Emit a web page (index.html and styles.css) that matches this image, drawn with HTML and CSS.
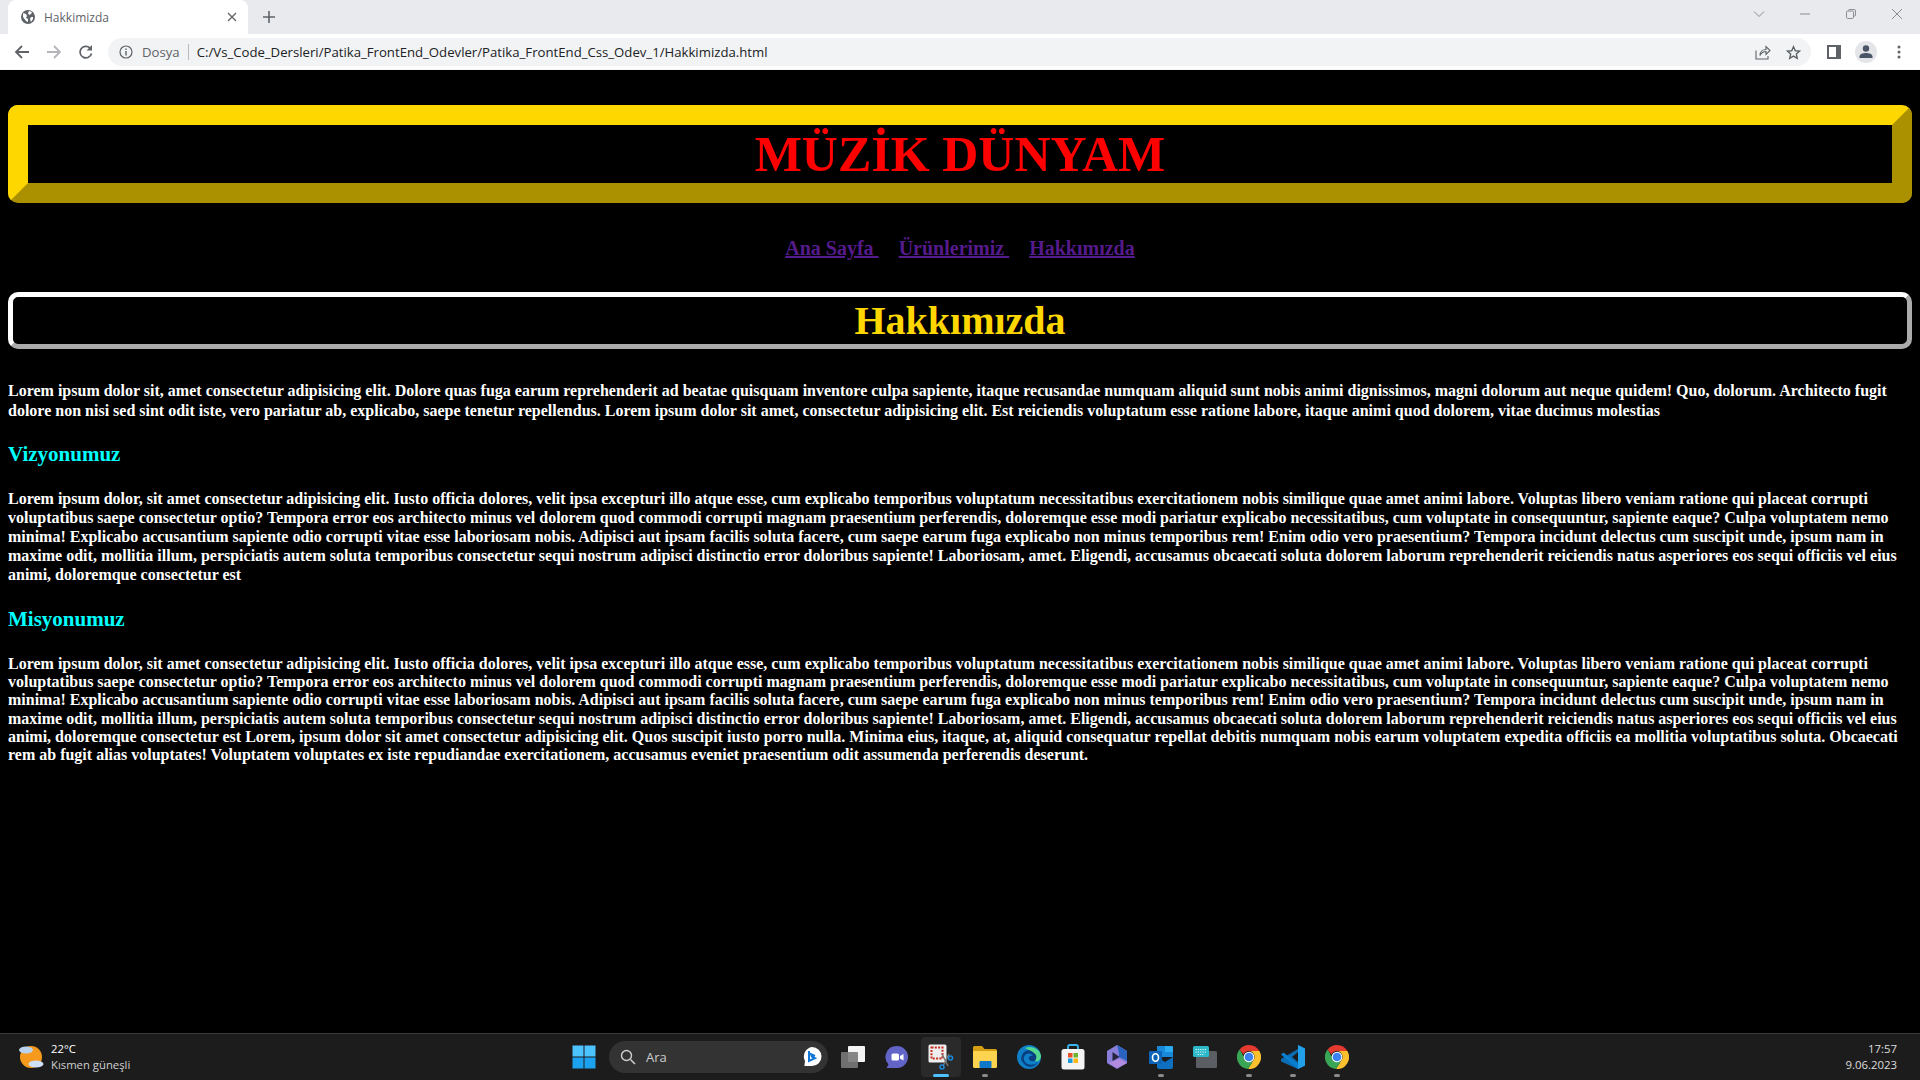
FILE: index.html
```html
<!DOCTYPE html>
<html lang="tr">
<head>
<meta charset="utf-8">
<title>Hakkimizda</title>
<link rel="stylesheet" href="styles.css">
</head>
<body>
<div class="browser">
  <div class="tabstrip">
    <div class="tab">
      <svg class="favicon" width="16" height="16" viewBox="0 0 16 16"><circle cx="8" cy="8" r="7" fill="#5f6368"/><path d="M3 4l3 1 1 2-1 2 2 1v3l-2-1-3-4zM9 2l3 1-1 2-2 1-1-2zM11 8l2 0 0 2-2 3-1-3z" fill="#fff"/></svg>
      <span class="tab-title">Hakkimizda</span>
      <svg class="tab-close" width="10" height="10" viewBox="0 0 10 10"><path d="M1 1l8 8M9 1l-8 8" stroke="#5f6368" stroke-width="1.3"/></svg>
    </div>
    <svg class="newtab" width="12" height="12" viewBox="0 0 12 12"><path d="M6 0v12M0 6h12" stroke="#5f6368" stroke-width="1.6"/></svg>
    <div class="winctrl">
      <svg class="chev" width="12" height="8" viewBox="0 0 12 8"><path d="M1 1.500l5 5 5-5" fill="none" stroke="#8a8d91" stroke-width="1"/></svg>
      <svg width="12" height="12" viewBox="0 0 12 12"><path d="M1 6h10" stroke="#8a8d91" stroke-width="1"/></svg>
      <svg width="12" height="12" viewBox="0 0 12 12"><rect x="1.500" y="3" width="7" height="7.500" rx="1.200" fill="none" stroke="#8a8d91"/><path d="M3.500 3V2.500q0-1 1-1H9q1.500 0 1.500 1.500V7q0 1-1 1H8.500" fill="none" stroke="#8a8d91"/></svg>
      <svg width="12" height="12" viewBox="0 0 12 12"><path d="M1 1l10 10M11 1L1 11" stroke="#8a8d91" stroke-width="1"/></svg>
    </div>
  </div>
  <div class="toolbar">
    <svg class="nav" width="16" height="16" viewBox="0 0 16 16"><path d="M15 8H2M8 2L2 8l6 6" fill="none" stroke="#5f6368" stroke-width="1.800"/></svg>
    <svg class="nav" width="16" height="16" viewBox="0 0 16 16"><path d="M1 8h13M8 2l6 6-6 6" fill="none" stroke="#b3b5b8" stroke-width="1.800"/></svg>
    <svg class="nav" width="16" height="16" viewBox="0 0 16 16"><path d="M13.500 9.500A5.800 5.800 0 1 1 12 4" fill="none" stroke="#5f6368" stroke-width="1.700"/><path d="M14 1v5.500H8.500z" fill="#5f6368"/></svg>
    <div class="omnibox">
      <svg width="14" height="14" viewBox="0 0 14 14"><circle cx="7" cy="7" r="6" fill="none" stroke="#5f6368" stroke-width="1.200"/><path d="M7 6v4.500M7 3.500v1.400" stroke="#5f6368" stroke-width="1.400"/></svg>
      <span class="scheme">Dosya</span>
      <span class="sep"></span>
      <span class="url">C:/Vs_Code_Dersleri/Patika_FrontEnd_Odevler/Patika_FrontEnd_Css_Odev_1/Hakkimizda.html</span>
      <svg class="ob-share" width="16" height="16" viewBox="0 0 16 16"><path d="M1 6.500V15h12v-3M5 11.500C5 7.500 8 5.500 11 5.500V2.500l4 4-4 4V7.500C8.500 7.500 6.500 8.500 5 11.500z" fill="none" stroke="#5f6368" stroke-width="1.100"/></svg>
      <svg class="ob-star" width="15" height="15" viewBox="0 0 16 16"><path d="M8 1.800l1.900 4.300 4.600.4-3.500 3.100 1 4.600L8 11.800l-4 2.400 1-4.600-3.500-3.100 4.600-.4z" fill="none" stroke="#5f6368" stroke-width="1.500"/></svg>
    </div>
    <svg class="tb-side" width="14" height="14" viewBox="0 0 14 14"><rect width="14" height="14" fill="#5f6368"/><rect x="2" y="2" width="7" height="10" fill="#fff"/></svg>
    <div class="avatar"><svg width="14" height="14" viewBox="0 0 14 14"><circle cx="7" cy="3.500" r="3.200" fill="#4a5568"/><path d="M0.500 13v-1.500C.5 9 4 8 7 8s6.500 1 6.500 3.500V13z" fill="#4a5568"/></svg></div>
    <svg class="kebab" width="4" height="14" viewBox="0 0 4 14"><circle cx="2" cy="2" r="1.500" fill="#5f6368"/><circle cx="2" cy="7" r="1.500" fill="#5f6368"/><circle cx="2" cy="12" r="1.500" fill="#5f6368"/></svg>
  </div>
  <main class="page">
    <h1 class="site-title">MÜZİK DÜNYAM</h1>
    <nav class="links">
      <a href="#a">Ana Sayfa </a>
      <a href="#b">Ürünlerimiz </a>
      <a href="#c">Hakkımızda</a>
    </nav>
    <h2 class="page-title">Hakkımızda</h2>
    <p class="intro">Lorem ipsum dolor sit, amet consectetur adipisicing elit. Dolore quas fuga earum reprehenderit ad beatae quisquam inventore culpa sapiente, itaque recusandae numquam aliquid sunt nobis animi dignissimos, magni dolorum aut neque quidem! Quo, dolorum. Architecto fugit dolore non nisi sed sint odit iste, vero pariatur ab, explicabo, saepe tenetur repellendus. Lorem ipsum dolor sit amet, consectetur adipisicing elit. Est reiciendis voluptatum esse ratione labore, itaque animi quod dolorem, vitae ducimus molestias</p>
    <h3 class="vision-title">Vizyonumuz</h3>
    <p class="vision">Lorem ipsum dolor, sit amet consectetur adipisicing elit. Iusto officia dolores, velit ipsa excepturi illo atque esse, cum explicabo temporibus voluptatum necessitatibus exercitationem nobis similique quae amet animi labore. Voluptas libero veniam ratione qui placeat corrupti voluptatibus saepe consectetur optio? Tempora error eos architecto minus vel dolorem quod commodi corrupti magnam praesentium perferendis, doloremque esse modi pariatur explicabo necessitatibus, cum voluptate in consequuntur, sapiente eaque? Culpa voluptatem nemo minima! Explicabo accusantium sapiente odio corrupti vitae esse laboriosam nobis. Adipisci aut ipsam facilis soluta facere, cum saepe earum fuga explicabo non minus temporibus rem! Enim odio vero praesentium? Tempora incidunt delectus cum suscipit unde, ipsum nam in maxime odit, mollitia illum, perspiciatis autem soluta temporibus consectetur sequi nostrum adipisci distinctio error doloribus sapiente! Laboriosam, amet. Eligendi, accusamus obcaecati soluta dolorem laborum reprehenderit reiciendis natus asperiores eos sequi officiis vel eius animi, doloremque consectetur est</p>
    <h3 class="mission-title">Misyonumuz</h3>
    <p class="mission">Lorem ipsum dolor, sit amet consectetur adipisicing elit. Iusto officia dolores, velit ipsa excepturi illo atque esse, cum explicabo temporibus voluptatum necessitatibus exercitationem nobis similique quae amet animi labore. Voluptas libero veniam ratione qui placeat corrupti voluptatibus saepe consectetur optio? Tempora error eos architecto minus vel dolorem quod commodi corrupti magnam praesentium perferendis, doloremque esse modi pariatur explicabo necessitatibus, cum voluptate in consequuntur, sapiente eaque? Culpa voluptatem nemo minima! Explicabo accusantium sapiente odio corrupti vitae esse laboriosam nobis. Adipisci aut ipsam facilis soluta facere, cum saepe earum fuga explicabo non minus temporibus rem! Enim odio vero praesentium? Tempora incidunt delectus cum suscipit unde, ipsum nam in maxime odit, mollitia illum, perspiciatis autem soluta temporibus consectetur sequi nostrum adipisci distinctio error doloribus sapiente! Laboriosam, amet. Eligendi, accusamus obcaecati soluta dolorem laborum reprehenderit reiciendis natus asperiores eos sequi officiis vel eius animi, doloremque consectetur est Lorem, ipsum dolor sit amet consectetur adipisicing elit. Quos suscipit iusto porro nulla. Minima eius, itaque, at, aliquid consequatur repellat debitis numquam nobis earum voluptatem expedita officiis ea mollitia voluptatibus soluta. Obcaecati rem ab fugit alias voluptates! Voluptatem voluptates ex iste repudiandae exercitationem, accusamus eveniet praesentium odit assumenda perferendis deserunt.</p>
  </main>
  <footer class="taskbar">
    <div class="weather">
      <svg width="28" height="28" viewBox="0 0 28 28"><circle cx="14" cy="14" r="11" fill="#f59a1c"/><ellipse cx="9" cy="7" rx="7" ry="3.500" fill="#b9d3ee"/><ellipse cx="19" cy="21" rx="7.500" ry="3.500" fill="#cfe1f5"/></svg>
      <div class="weather-text"><span class="temp">22°C</span><span class="cond">Kısmen güneşli</span></div>
    </div>
    <div class="apps">
      <div class="app"><svg width="24" height="24" viewBox="0 0 24 24"><rect x="0.500" y="0.500" width="11" height="11" fill="#4cc2ff"/><rect x="12.500" y="0.500" width="11" height="11" fill="#4cc2ff"/><rect x="0.500" y="12.500" width="11" height="11" fill="#1ca0f0"/><rect x="12.500" y="12.500" width="11" height="11" fill="#1ca0f0"/></svg></div>
      <div class="search">
        <svg width="16" height="16" viewBox="0 0 16 16"><circle cx="6.500" cy="6.500" r="5" fill="none" stroke="#d0d0d0" stroke-width="1.400"/><path d="M10.500 10.500L15 15" stroke="#d0d0d0" stroke-width="1.500"/></svg>
        <span>Ara</span>
        <svg class="bing" width="20" height="20" viewBox="0 0 20 20"><path d="M10 0a9.500 9.500 0 0 1 0 19H2.500v-1.500L3 14A9.500 9.500 0 0 1 10 0z" fill="#fff"/><path d="M7 4v10l6-2.800-3-1.500-1-2.500 4 1.800" fill="none" stroke="#1176d6" stroke-width="2"/></svg>
      </div>
      <div class="app"><svg width="24" height="22" viewBox="0 0 24 22"><rect x="7" y="0" width="17" height="16" rx="1" fill="#f4f4f4"/><rect x="0" y="6" width="17" height="16" rx="1" fill="#7a7a7a" opacity=".9"/></svg></div>
      <div class="app"><svg width="24" height="24" viewBox="0 0 24 24"><path d="M12 1a11 11 0 0 1 0 22H1.500l2-3.500A11 11 0 0 1 12 1z" fill="#6264c8"/><rect x="6.500" y="8.500" width="7.500" height="7" rx="1.500" fill="#fff"/><path d="M15 11l3.500-2v6.500L15 13.500z" fill="#fff"/></svg></div>
      <div class="app active"><svg width="26" height="26" viewBox="0 0 26 26"><rect x="0.500" y="0.500" width="18" height="18" rx="1.500" fill="#eee"/><rect x="3.500" y="3.500" width="11" height="11" fill="none" stroke="#c42b1c" stroke-width="2" stroke-dasharray="2 1.300"/><path d="M14 10l6 12M21 10l-6 12" stroke="#777" stroke-width="1.500"/><circle cx="14" cy="23" r="2" fill="none" stroke="#1c8adf" stroke-width="1.500"/><circle cx="22.500" cy="14" r="2" fill="none" stroke="#1c8adf" stroke-width="1.500"/></svg></div>
      <div class="app run"><svg width="24" height="22" viewBox="0 0 24 22"><path d="M0 1.500A1.500 1.500 0 0 1 1.500 0H9l2.500 3H22.500A1.500 1.500 0 0 1 24 4.500V6H0z" fill="#d69e12"/><path d="M0 5h24v15.500A1.500 1.500 0 0 1 22.500 22h-21A1.500 1.500 0 0 1 0 20.500z" fill="#fcd44f"/><rect x="6.500" y="15" width="12" height="7" rx="1" fill="#0f78c9"/></svg></div>
      <div class="app"><svg width="24" height="24" viewBox="0 0 24 24"><circle cx="12" cy="12" r="12" fill="#0f7fc8"/><path d="M5 17C2 10 8 4 14 5c5 1 8 5 6 9-2 3-7 3-8 0-1-2 1-4 4-3C14 7 8 8 7 12c-.5 2 0 4 2 6s8 3 12-1c-3 6-12 7-16-1z" fill="#0a3f82"/><path d="M8 3c7-3 15 1 16 8 0 4-3 6-6 5 2-3 2-6-1-8-3-3-6-3-9-5z" fill="#54d88e"/></svg></div>
      <div class="app"><svg width="24" height="26" viewBox="0 0 24 26"><path d="M7 7V3q0-2 2-2h6q2 0 2 2v4" fill="none" stroke="#3cb4f0" stroke-width="1.800"/><rect x="0.500" y="5" width="23" height="20.500" rx="2.500" fill="#f4f4f4"/><rect x="7" y="9" width="4.500" height="4.500" fill="#e8512a"/><rect x="12.500" y="9" width="4.500" height="4.500" fill="#6cb52d"/><rect x="7" y="14.500" width="4.500" height="4.500" fill="#1a9be0"/><rect x="12.500" y="14.500" width="4.500" height="4.500" fill="#fdb714"/></svg></div>
      <div class="app"><svg width="20" height="24" viewBox="0 0 20 24"><path d="M10 0l10 6v12l-10 6-10-6V6z" fill="#8a7fd8"/><path d="M2 18l8 5 10-5-8-4z" fill="#b38be0"/><path d="M10 0l10 6v10l-8-4V8z" fill="#2a62c0"/><path d="M5.500 7l7 5-7 4z" fill="#24243c"/></svg></div>
      <div class="app run"><svg width="24" height="24" viewBox="0 0 24 24"><path d="M8 1h14q2 0 2 1v10H8z" fill="#1a88d8"/><path d="M16 1h6q2 0 2 1v5h-8z" fill="#2aaaf0"/><path d="M8 12l8 5 8-5v10q0 2-2 2H10q-2 0-2-2z" fill="#0e6fc0"/><rect x="0" y="6" width="13" height="13" rx="1" fill="#0c64b8"/><ellipse cx="6.500" cy="12.500" rx="3" ry="3.800" fill="none" stroke="#fff" stroke-width="1.600"/></svg></div>
      <div class="app"><svg width="24" height="22" viewBox="0 0 24 22"><rect x="3" y="5" width="21" height="17" rx="1.500" fill="#5b5f63"/><rect x="0" y="0" width="16" height="11" rx="1.500" fill="#2bb8c8"/><path d="M2.500 3.500h11M2.500 6h11M4.500 8.500h7" stroke="#d5f5f8" stroke-dasharray="1.300 1"/></svg></div>
      <div class="app run"><svg width="24" height="24" viewBox="0 0 24 24"><path d="M12 0a12 12 0 0 1 10.400 6H12a6 6 0 0 0-5.500 3.500L2.600 4.500A12 12 0 0 1 12 0z" fill="#e53a2f"/><path d="M22.400 6A12 12 0 0 1 11 24l4.900-8A6 6 0 0 0 17 9.500 6 6 0 0 0 12 6z" fill="#fbc02d"/><path d="M2.600 4.500l5 8.500A6 6 0 0 0 16 16l-5 8A12 12 0 0 1 2.600 4.500z" fill="#3aa655"/><circle cx="12" cy="12" r="5.300" fill="#fff"/><circle cx="12" cy="12" r="4.300" fill="#3b82f0"/></svg></div>
      <div class="app run"><svg width="24" height="24" viewBox="0 0 24 24"><path d="M17 0l7 3.400v17L17 24 0 16.500V14L17 4z" fill="#0a6db5"/><path d="M0 9.500L2.500 7.500 17 19v5L0 9.500z" fill="#0a7fd0"/><path d="M17 0l7 3.400v17L17 24z" fill="#22a0ea"/><path d="M17 7l-6 5 6 5z" fill="#1c1c1c"/></svg></div>
      <div class="app run"><svg width="24" height="24" viewBox="0 0 24 24"><path d="M12 0a12 12 0 0 1 10.400 6H12a6 6 0 0 0-5.500 3.500L2.600 4.500A12 12 0 0 1 12 0z" fill="#e53a2f"/><path d="M22.400 6A12 12 0 0 1 11 24l4.900-8A6 6 0 0 0 17 9.500 6 6 0 0 0 12 6z" fill="#fbc02d"/><path d="M2.600 4.500l5 8.500A6 6 0 0 0 16 16l-5 8A12 12 0 0 1 2.600 4.500z" fill="#3aa655"/><circle cx="12" cy="12" r="5.300" fill="#fff"/><circle cx="12" cy="12" r="4.300" fill="#3b82f0"/></svg></div>
    </div>
    <div class="clock"><span>17:57</span><span>9.06.2023</span></div>
  </footer>
</div>
</body>
</html>
```
FILE: styles.css
```css
* { box-sizing: border-box; }
html, body { margin: 0; height: 100%; overflow: hidden; background: #000; }
.browser { height: 100vh; display: flex; flex-direction: column; }
svg { display: block; flex: none; }

.tabstrip { height: 34px; flex: none; background: #e8eaed; display: flex; align-items: center; padding-left: 8px; }
.tab { width: 240px; height: 34px; background: #fff; border-radius: 8px 8px 0 0; display: flex; align-items: center; padding: 0 11px 0 12px; gap: 8px; }
.favicon { width: 16px; height: 16px; }
.tab-title { font: 12px "Open Sans", sans-serif; color: #5f6368; flex: 1; }
.newtab { margin-left: 15px; }
.winctrl { margin-left: auto; display: flex; align-items: center; gap: 34px; padding: 0 17px 6px 0; }

.toolbar { height: 36px; flex: none; background: #fff; display: flex; align-items: center; padding-left: 14px; box-shadow: inset 0 -1px 0 #f4f4f5; }
.nav { margin-right: 16px; }
.omnibox { margin-left: -2px; width: 1703px; height: 28px; border-radius: 14px; background: #f1f3f4; display: flex; align-items: center; padding-left: 11px; font: 13.18px "Open Sans", sans-serif; }
.scheme { color: #5f6368; margin-left: 9px; }
.sep { width: 1px; height: 16px; background: #b8babd; margin: 0 8px 0 8px; }
.url { color: #202124; }
.ob-share { margin-left: auto; }
.ob-star { margin: 0 10px 0 15px; }
.tb-side { margin-left: 16px; }
.avatar { width: 22px; height: 22px; border-radius: 50%; background: #e3e5e9; margin-left: 14px; display: flex; align-items: center; justify-content: center; }
.kebab { margin-left: 20px; }

.page { flex: 1; min-height: 0; padding: 35px 8px 0; background: #000; color: #fff; font-family: "Liberation Serif", serif; font-weight: bold; overflow: hidden; }
.site-title { margin: 0; text-align: center; color: #f00; font-size: 50px; line-height: 58px; border: 20px outset gold; border-radius: 10px; }
.links { margin: 34px 0 0; text-align: center; font-size: 20px; line-height: 23px; display: flex; justify-content: center; gap: 20px; }
.links a { color: #551a8b; white-space: pre; }
.page-title { margin: 32px 0 0; text-align: center; color: gold; font-size: 40px; line-height: 47px; border: 5px outset #fff; border-radius: 10px; }
.page p { font-size: 16px; }
.page h3 { color: cyan; font-size: 21px; line-height: 24px; }
.intro { margin: 32px 0 0; line-height: 20px; }
.page .vision-title { margin: 21px 0 0; }
.vision { margin: 23px 0 0; line-height: 19px; }
.page .mission-title { margin: 23px 0 0; }
.mission { margin: 24px 0 0; line-height: 18.2px; }

.taskbar { height: 47px; flex: none; background: #1c1c1c; border-top: 1px solid #3a3a3a; display: flex; align-items: center; font-family: "Open Sans", sans-serif; }
.weather { width: 562px; flex: none; display: flex; align-items: center; padding-left: 17px; gap: 6px; }
.weather-text { display: flex; flex-direction: column; font-size: 11.3px; line-height: 16px; color: #fff; }
.cond { color: #d0d0d0; }
.apps { display: flex; align-items: center; height: 100%; }
.app { width: 44px; height: 100%; display: flex; align-items: center; justify-content: center; position: relative; }
.app.run::after, .app.active::after { content: ""; position: absolute; bottom: 3px; left: 50%; margin-left: -3px; width: 6px; height: 3px; border-radius: 2px; background: #8a8a8a; }
.app.active { background: #2a2a2a; border-radius: 4px; height: 40px; width: 40px; margin: 0 2px; }
.app.active::after { width: 16px; margin-left: -8px; background: #4cc2ff; bottom: 0; }
.search { width: 219px; height: 32px; border-radius: 16px; background: #333; display: flex; align-items: center; padding: 0 6px 0 11px; gap: 10px; color: #ccc; font-size: 13px; margin: 0 3px 0 3px; }
.bing { margin-left: auto; }
.clock { margin-left: auto; padding-right: 23px; display: flex; flex-direction: column; align-items: flex-end; font-size: 11.4px; line-height: 16px; color: #ddd; }
```
